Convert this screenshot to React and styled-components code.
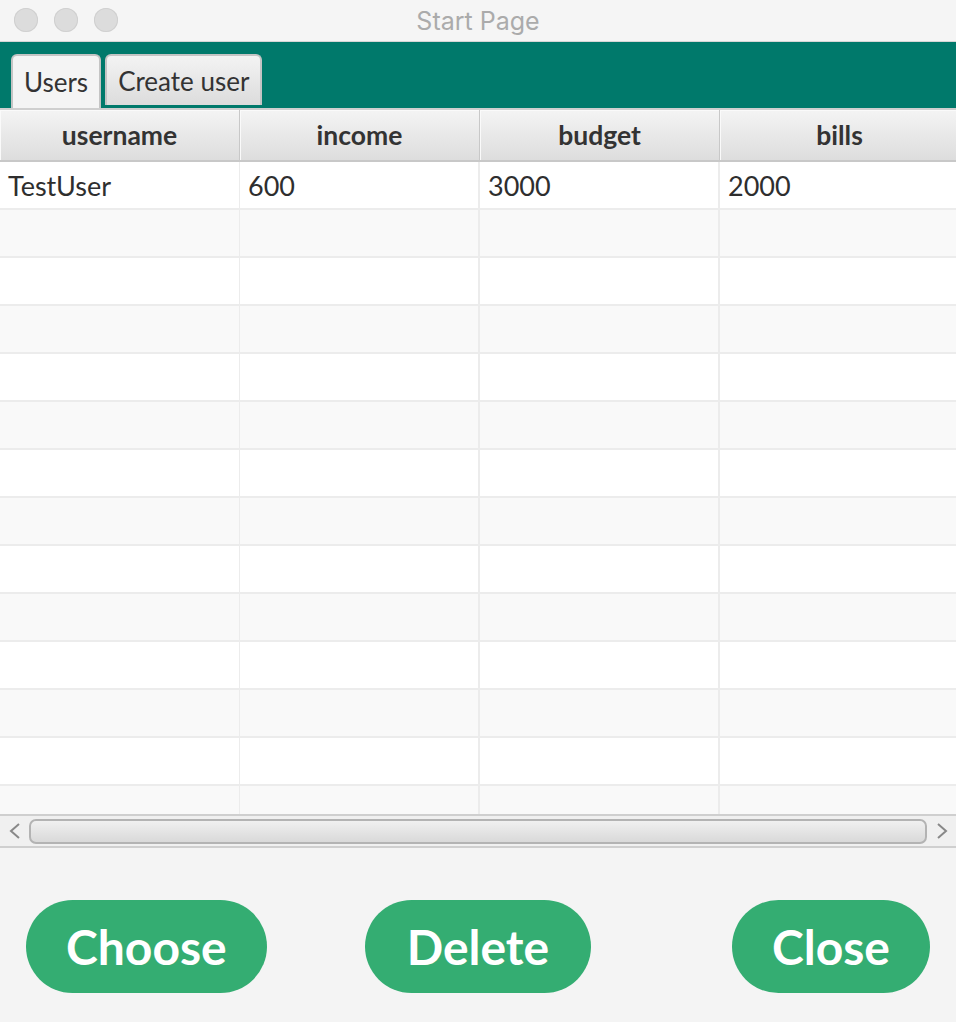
import React from "react"
import styled, { createGlobalStyle } from "styled-components"

const GlobalStyle = createGlobalStyle`
	html, body {
		margin: 0;
		padding: 0;
		background: #f4f4f4;
		font-family: Lato, "Open Sans", sans-serif;
	}
`

const columns = ["username", "income", "budget", "bills"]
const users = [["TestUser", "600", "3000", "2000"]]
const emptyRows = 13

function App() {
	const rows = [...users, ...Array.from(Array(emptyRows)).map(() => ["", "", "", ""])]

	return (
		<Window>
			<GlobalStyle />
			<TitleBar>
				<Lights>
					<Light />
					<Light />
					<Light />
				</Lights>
				<Title>Start Page</Title>
			</TitleBar>

			<TabBar>
				<Tab selected>Users</Tab>
				<Tab>Create user</Tab>
			</TabBar>

			<Table>
				<HeaderRow>
					{columns.map((col) => (
						<HeaderCell key={col}>{col}</HeaderCell>
					))}
				</HeaderRow>
				<Body>
					{rows.map((row, index) => (
						<Row key={index} odd={index % 2 === 1}>
							{row.map((value, i) => (
								<Cell key={i}>{value}</Cell>
							))}
						</Row>
					))}
				</Body>
				<ScrollBar>
					<Arrow>
						<svg width="14" height="20" viewBox="0 0 14 20">
							<path d="M11 3 L3 10 L11 17" fill="none" stroke="#888" strokeWidth="2" />
						</svg>
					</Arrow>
					<Thumb />
					<Arrow>
						<svg width="14" height="20" viewBox="0 0 14 20">
							<path d="M3 3 L11 10 L3 17" fill="none" stroke="#888" strokeWidth="2" />
						</svg>
					</Arrow>
				</ScrollBar>
			</Table>

			<Actions>
				<Button>Choose</Button>
				<Button wide>Delete</Button>
				<Button push>Close</Button>
			</Actions>
		</Window>
	)
}

export default App

const Window = styled.div`
	width: 956px;
	height: 1022px;
	display: flex;
	flex-direction: column;
	background: #f4f4f4;
	overflow: hidden;
`
const TitleBar = styled.div`
	height: 41px;
	flex-shrink: 0;
	display: flex;
	align-items: center;
	justify-content: center;
	position: relative;
	border-bottom: 1px solid #d6d6d6;
	background: #f5f5f5;
`
const Lights = styled.div`
	position: absolute;
	left: 14px;
	top: 8px;
	display: flex;
	gap: 16px;
`
const Light = styled.div`
	width: 24px;
	height: 24px;
	border-radius: 50%;
	background: #dcdcdc;
	box-shadow: inset 0 0 0 1px #d0d0d0;
`
const Title = styled.div`
	font-family: Inter, "Noto Sans", sans-serif;
	font-size: 25px;
	color: #ababab;
`
const TabBar = styled.div`
	height: 66px;
	flex-shrink: 0;
	background: #00796b;
	display: flex;
	align-items: flex-end;
	gap: 4px;
	padding-left: 11px;
	border-bottom: 2px solid #cfcfcf;
`
const Tab = styled.div`
	height: ${(p) => (p.selected ? "54px" : "51px")};
	margin-bottom: ${(p) => (p.selected ? "0" : "3px")};
	box-sizing: border-box;
	padding: 0 11px;
	display: flex;
	align-items: center;
	font-size: 26px;
	color: #333;
	border: 2px solid #c4c4c4;
	border-bottom: none;
	border-radius: 6px 6px 0 0;
	background: ${(p) =>
		p.selected ? "#f4f4f4" : "linear-gradient(#f3f3f3, #dcdcdc)"};
`
const Table = styled.div`
	flex-shrink: 0;
	display: flex;
	flex-direction: column;
	background: #ffffff;
`
const HeaderRow = styled.div`
	display: grid;
	grid-template-columns: repeat(4, 240px);
	height: 52px;
	border-bottom: 2px solid #c8c8c8;
	box-sizing: border-box;
`
const HeaderCell = styled.div`
	display: flex;
	align-items: center;
	justify-content: center;
	font-weight: 700;
	font-size: 26.5px;
	color: #333;
	background: linear-gradient(#f4f4f4, #dddddd);
	border-right: 1px solid #c8c8c8;
	box-shadow: inset 1px 1px 0 #fafafa;
`
const Body = styled.div`
	height: 652px;
	overflow: hidden;
`
const Row = styled.div`
	display: grid;
	grid-template-columns: repeat(4, 240px);
	height: 48px;
	box-sizing: border-box;
	border-bottom: 2px solid #ececec;
	background: ${(p) => (p.odd ? "#f9f9f9" : "#ffffff")};
`
const Cell = styled.div`
	display: flex;
	align-items: center;
	padding-left: 8px;
	font-size: 27px;
	color: #2e2e2e;
	border-right: 2px solid #ececec;
	&:nth-child(1) {
		border-right-width: 1px;
	}
`
const ScrollBar = styled.div`
	height: 34px;
	box-sizing: border-box;
	display: flex;
	align-items: center;
	background: #f0f0f0;
	border-top: 2px solid #cfcfcf;
	border-bottom: 2px solid #cfcfcf;
`
const Arrow = styled.div`
	width: 29px;
	display: flex;
	justify-content: center;
	align-items: center;
`
const Thumb = styled.div`
	flex: 1;
	height: 25px;
	box-sizing: border-box;
	border: 2px solid #b3b3b3;
	border-radius: 7px;
	background: linear-gradient(#f0f0f0, #d9d9d9);
`
const Actions = styled.div`
	flex: 1;
	display: flex;
	align-items: flex-start;
	padding: 52px 26px 0 26px;
	gap: 98px;
`
const Button = styled.div`
	height: 93px;
	padding: 0 ${(p) => (p.wide ? "42px" : "40px")};
	margin-left: ${(p) => (p.push ? "auto" : "0")};
	display: flex;
	align-items: center;
	justify-content: center;
	border-radius: 47px;
	background: #34ad72;
	color: #ffffff;
	font-weight: 700;
	font-size: 48px;
`
